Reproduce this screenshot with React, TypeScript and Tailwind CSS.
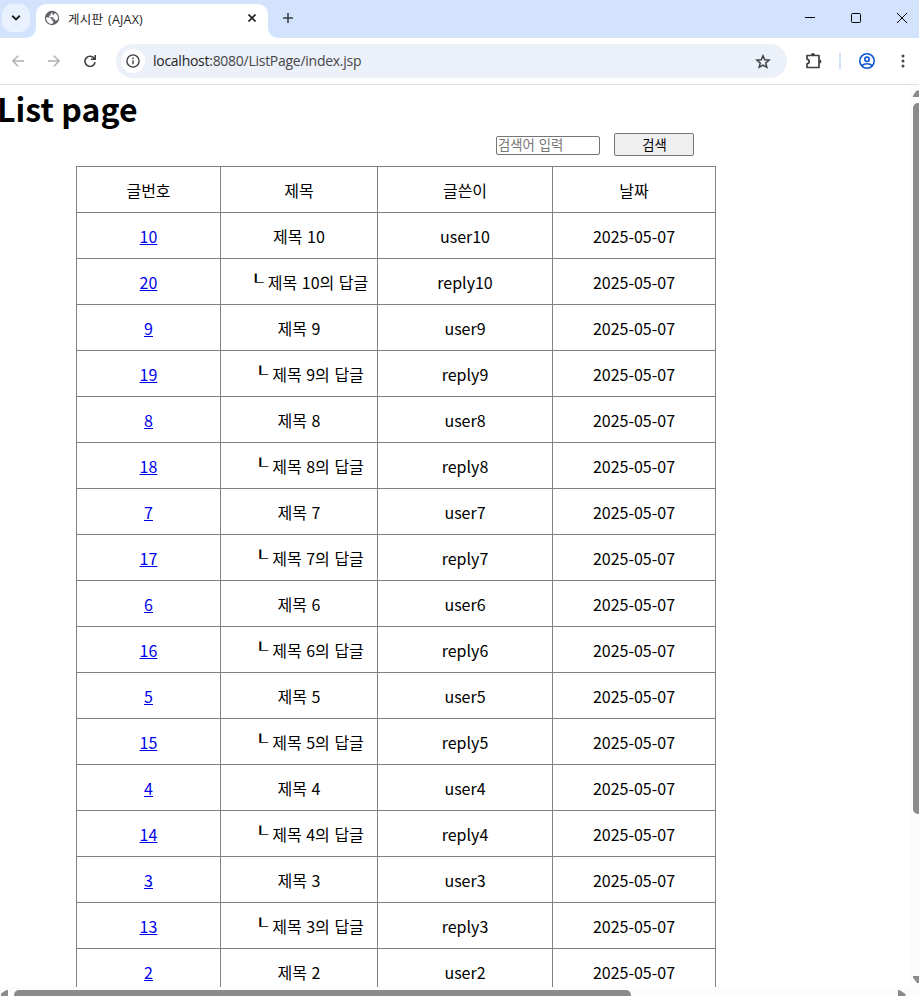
import React from 'react';

type Row = { id: number; title: string; writer: string; reply: boolean };

const rows: Row[] = [];
for (let n = 10; n >= 2; n--) {
  rows.push({ id: n, title: `제목 ${n}`, writer: `user${n}`, reply: false });
  if (n > 2) rows.push({ id: n + 10, title: `제목 ${n}의 답글`, writer: `reply${n}`, reply: true });
}

function TabStrip() {
  return (
    <div className="flex h-[38px] shrink-0 bg-[#d3e3fd]">
      <div className="flex h-[38px] w-9 shrink-0 items-start pl-[2px] pt-1">
        <div className="flex h-7 w-7 items-center justify-center rounded-[10px] bg-[#e9f1fe]">
          <svg width="10" height="6" viewBox="0 0 10 6" fill="none" stroke="#1f1f1f" strokeWidth="1.9"><path d="M1.2 .8 5 4.5 8.8 .8" /></svg>
        </div>
      </div>
      <div className="relative mt-1 flex h-[34px] w-[232px] items-center rounded-t-[10px] bg-white pb-[4px]">
        <svg className="absolute -left-[10px] bottom-0" width="10" height="10"><path d="M10 0A10 10 0 0 1 0 10H10Z" fill="#fff" /></svg>
        <svg className="absolute -right-[10px] bottom-0" width="10" height="10"><path d="M0 0A10 10 0 0 0 10 10H0Z" fill="#fff" /></svg>
        <svg className="-mt-[2px] ml-[8px] shrink-0" width="16" height="16" viewBox="0 0 16 16">
          <circle cx="8" cy="8" r="7.2" fill="#5f6368" />
          <path d="M8.8 2.1 6.6 4v1.5H5.2v1.7h4.2v2.1h1.4l.8 1.5 1.9-.8A5.8 5.8 0 0 0 11 2.9L9.7 4.8H8.2ZM2 7.6h3.8l2 1.7v1.5h1.5v1.4l-1.1 1.7A5.9 5.9 0 0 1 2 7.6Z" fill="#fff" />
        </svg>
        <span className="ml-[8px] mt-[2px] whitespace-pre text-[12.5px] leading-4 tracking-[0.2px] [word-spacing:1.5px] text-[#1f1f1f] font-['Open_Sans','Noto_Sans_CJK_KR',sans-serif]">게시판 (AJAX)</span>
        <svg className="-mt-[2px] ml-auto mr-[12px]" width="8" height="8" viewBox="0 0 8 8" stroke="#1f1f1f" strokeWidth="1.6"><path d="M.5 .5l7 7M7.5 .5l-7 7" /></svg>
      </div>
      <svg className="ml-[15px] mt-[13px]" width="10" height="10" viewBox="0 0 10 10" stroke="#3c4043" strokeWidth="1.6"><path d="M5 0v10M0 5h10" /></svg>
      <div className="ml-auto mr-[12px] mt-[13px] flex gap-[36px]">
        <svg width="10" height="10" shapeRendering="crispEdges"><path d="M0 4.5h10" stroke="#000" /></svg>
        <svg width="10" height="10"><rect x=".5" y=".5" width="9" height="9" rx="1" fill="none" stroke="#000" /></svg>
        <svg width="10" height="10"><path d="M0 0l10 10M10 0L0 10" stroke="#000" /></svg>
      </div>
    </div>
  );
}

function Toolbar() {
  return (
    <div className="flex h-[47px] shrink-0 items-center border-b border-[#dfe1e5] bg-white">
      <svg className="ml-[12px]" width="12" height="12" viewBox="0 0 12 12" fill="none" stroke="#afb1b4" strokeWidth="1.5"><path d="M12 6H1M6.2 .7 .9 6l5.3 5.3" /></svg>
      <svg className="ml-[24px]" width="12" height="12" viewBox="0 0 12 12" fill="none" stroke="#afb1b4" strokeWidth="1.5"><path d="M0 6h11M5.8 .7 11.1 6l-5.3 5.3" /></svg>
      <svg className="ml-[24px]" width="12" height="12" viewBox="0 0 12 12" fill="none" stroke="#3c4043" strokeWidth="1.6"><path d="M10.5 3.8A5.1 5.1 0 1 0 11.1 7.2M11.2 0v4.3H6.8" /></svg>
      <div className="ml-[20px] flex h-[34px] w-[671px] items-center rounded-full bg-[#ebf0f9] pl-[5px] pr-[16px]">
        <div className="flex h-6 w-6 items-center justify-center rounded-full bg-white">
          <svg width="14" height="14" viewBox="0 0 14 14" fill="none" stroke="#3c4043" strokeWidth="1.4"><circle cx="7" cy="7" r="6.1" /><path d="M7 6.2v4M7 3.6V5" /></svg>
        </div>
        <span className="ml-[8px] whitespace-pre text-[14px] leading-5 tracking-[-0.27px] text-[#474747] font-['Open_Sans',sans-serif]"><span className="text-[#1f1f1f]">localhost</span>:8080/ListPage/index.jsp</span>
        <svg className="ml-auto" width="16" height="15" viewBox="0 0 16 15" fill="none" stroke="#3c4043" strokeWidth="1.5"><path d="m8 1.8 1.75 4 4.35.4-3.3 2.85 1 4.25L8 11.1l-3.8 2.2 1-4.25L1.9 6.2l4.35-.4Z" /></svg>
      </div>
      <svg className="ml-[18px]" width="18" height="18" viewBox="0 0 18 18" fill="none" stroke="#3c4043" strokeWidth="1.7"><path d="M2 3.5h12v12H2v-3.7c2.9-.5 2.9-4.2 0-4.7Z" strokeLinejoin="round" /><path d="M6 3a2 2 0 0 1 4 0ZM14.4 7.4a2 2 0 0 1 0 4Z" fill="#3c4043" stroke="none" /></svg>
      <div className="ml-[16px] h-4 w-[2px] bg-[#d3e3fd]" />
      <svg className="ml-[18px]" width="16" height="16" viewBox="0 0 16 16" fill="none" stroke="#0b57d0" strokeWidth="1.6"><circle cx="8" cy="8" r="7.2" /><circle cx="8" cy="6.3" r="2.2" /><path d="M2.8 12.6c2.8-2.4 7.6-2.4 10.4 0" /></svg>
      <svg className="ml-[26px]" width="4" height="14" fill="#474747"><circle cx="2" cy="2" r="1.5" /><circle cx="2" cy="7" r="1.5" /><circle cx="2" cy="12" r="1.5" /></svg>
    </div>
  );
}

const cell = 'border border-[#808080] p-0 text-center font-normal';

export default function App() {
  return (
    <div className="flex h-[996px] w-[919px] flex-col overflow-hidden bg-white text-black font-['Noto_Sans_CJK_KR',sans-serif]">
      <TabStrip />
      <Toolbar />
      <div className="flex h-[902px] shrink-0">
        <main className="h-full w-[910px] overflow-hidden">
          <h1 className="-ml-[3px] h-[48px] whitespace-pre text-[32px] font-bold leading-[46px] tracking-[0.05px]">List page</h1>
          <div className="flex h-[33px] pl-[496px]">
            <input placeholder="검색어 입력" className="mt-[3px] h-[19px] w-[104px] rounded-[2px] border border-[#767676] bg-white px-[1px] pb-[2px] text-[13.33px] leading-[15px] [word-spacing:1px] placeholder:text-[#757575]" />
            <button className="ml-[14px] h-[23px] w-[80px] rounded-[2px] border border-[#767676] bg-[#efefef] pl-[1px] text-[13.33px] leading-[21px]">검색</button>
          </div>
          <table className="ml-[76px] w-[640px] table-fixed border-collapse text-[16px] leading-6 [word-spacing:1px]">
            <colgroup>
              <col className="w-[144px]" />
              <col className="w-[157px]" />
              <col className="w-[175px]" />
              <col className="w-[163px]" />
            </colgroup>
            <tbody>
              <tr className="h-[46px]">
                {['글번호', '제목', '글쓴이', '날짜'].map((t) => <th key={t} className={cell}>{t}</th>)}
              </tr>
              {rows.map((r) => (
                <tr key={r.id} className="h-[46px]">
                  <td className={cell}><a className="text-[#0000ee] underline" href="#">{r.id}</a></td>
                  <td className={cell}>
                    {r.reply ? <span className="whitespace-pre pl-[18px]"><span className="mr-[4px] inline-block w-4 -translate-y-px">┖</span>{r.title}</span> : r.title}
                  </td>
                  <td className={cell}>{r.writer}</td>
                  <td className={cell}>2025-05-07</td>
                </tr>
              ))}
            </tbody>
          </table>
        </main>
        <div className="flex w-[9px] flex-col items-end bg-[#fcfcfc]">
          <svg className="mt-[5px]" width="6" height="7"><path d="M0 7V5.5L3.5 .5H6V7Z" fill="#8b8b8b" /></svg>
          <div className="mt-[6px] h-[711px] w-[6px] rounded-l-[5px] bg-[#8b8b8b]" />
          <svg className="mt-[162px]" width="6" height="7"><path d="M0 0h6v7H4L0 1.5Z" fill="#8b8b8b" /></svg>
        </div>
      </div>
      <div className="flex h-[9px] shrink-0 bg-[#fcfcfc] pt-[3px]">
        <svg width="8" height="6"><path d="M8 0H6.5L1 3.5V6h7Z" fill="#8b8b8b" /></svg>
        <div className="ml-[6px] h-[6px] w-[617px] rounded-t-[5px] bg-[#8b8b8b]" />
        <svg className="ml-[267px]" width="8" height="6"><path d="M0 0h1.5L7.5 4v2H0Z" fill="#8b8b8b" /></svg>
      </div>
    </div>
  );
}
